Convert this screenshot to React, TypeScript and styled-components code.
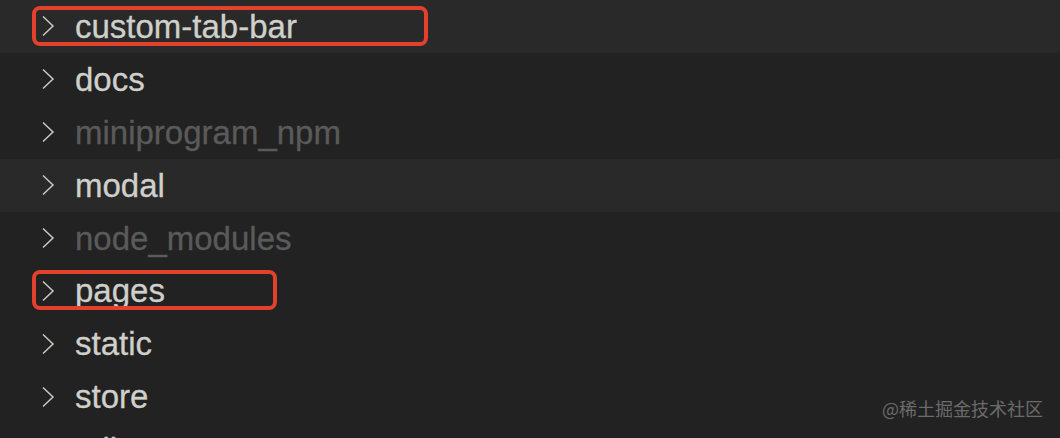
import styled, { createGlobalStyle } from "styled-components";

const GlobalStyle = createGlobalStyle`
  html, body {
    margin: 0;
    padding: 0;
    background: #222222;
  }
  body {
    font-family: "Liberation Sans", Arial, sans-serif;
    overflow: hidden;
  }
`;

type Folder = { name: string; dim?: boolean; lit?: boolean; box?: number };

const folders: Folder[] = [
  { name: "custom-tab-bar", lit: true, box: 396 },
  { name: "docs" },
  { name: "miniprogram_npm", dim: true },
  { name: "modal", lit: true },
  { name: "node_modules", dim: true },
  { name: "pages", box: 245 },
  { name: "static" },
  { name: "store" },
  { name: "utils" },
];

const Chevron = () => (
  <svg width="14" height="24" viewBox="0 0 14 24">
    <path d="M2 2.5 L12 12 L2 21.5" fill="none" stroke="#c9c9c6" strokeWidth="1.5" />
  </svg>
);

export default function App() {
  return (
    <Explorer>
      <GlobalStyle />
      {folders.map((f) => (
        <Row key={f.name} $lit={f.lit}>
          <ChevronSlot>
            <Chevron />
          </ChevronSlot>
          <Name $dim={f.dim}>{f.name}</Name>
          {f.box && <Marker $width={f.box} />}
        </Row>
      ))}
      <Watermark>@稀土掘金技术社区</Watermark>
    </Explorer>
  );
}

const Explorer = styled.div`
  position: relative;
  width: 1060px;
  height: 438px;
  overflow: hidden;
  background: #222222;
  display: flex;
  flex-direction: column;
`;

const Row = styled.div<{ $lit?: boolean }>`
  position: relative;
  flex: none;
  height: 52.9px;
  display: flex;
  align-items: center;
  padding-left: 41px;
  background: ${(p) => (p.$lit ? "#292929" : "#222222")};
`;

const ChevronSlot = styled.span`
  display: flex;
  width: 14px;
  margin-right: 20px;
`;

const Name = styled.span<{ $dim?: boolean }>`
  font-size: 33px;
  line-height: 1;
  color: ${(p) => (p.$dim ? "#5a5a5a" : "#d0d0cb")};
  -webkit-text-stroke: 0.3px ${(p) => (p.$dim ? "#5a5a5a" : "#d0d0cb")};
  white-space: nowrap;
`;

const Marker = styled.span<{ $width: number }>`
  position: absolute;
  left: 32px;
  top: 6px;
  width: ${(p) => p.$width}px;
  height: 40px;
  box-sizing: border-box;
  border: 4px solid #e3402d;
  border-radius: 8px;
  pointer-events: none;
`;

const Watermark = styled.div`
  position: absolute;
  right: 17px;
  top: 399px;
  font-family: "Noto Sans CJK SC", "Noto Sans", sans-serif;
  font-size: 18px;
  line-height: 1;
  color: #6b6b6b;
`;
